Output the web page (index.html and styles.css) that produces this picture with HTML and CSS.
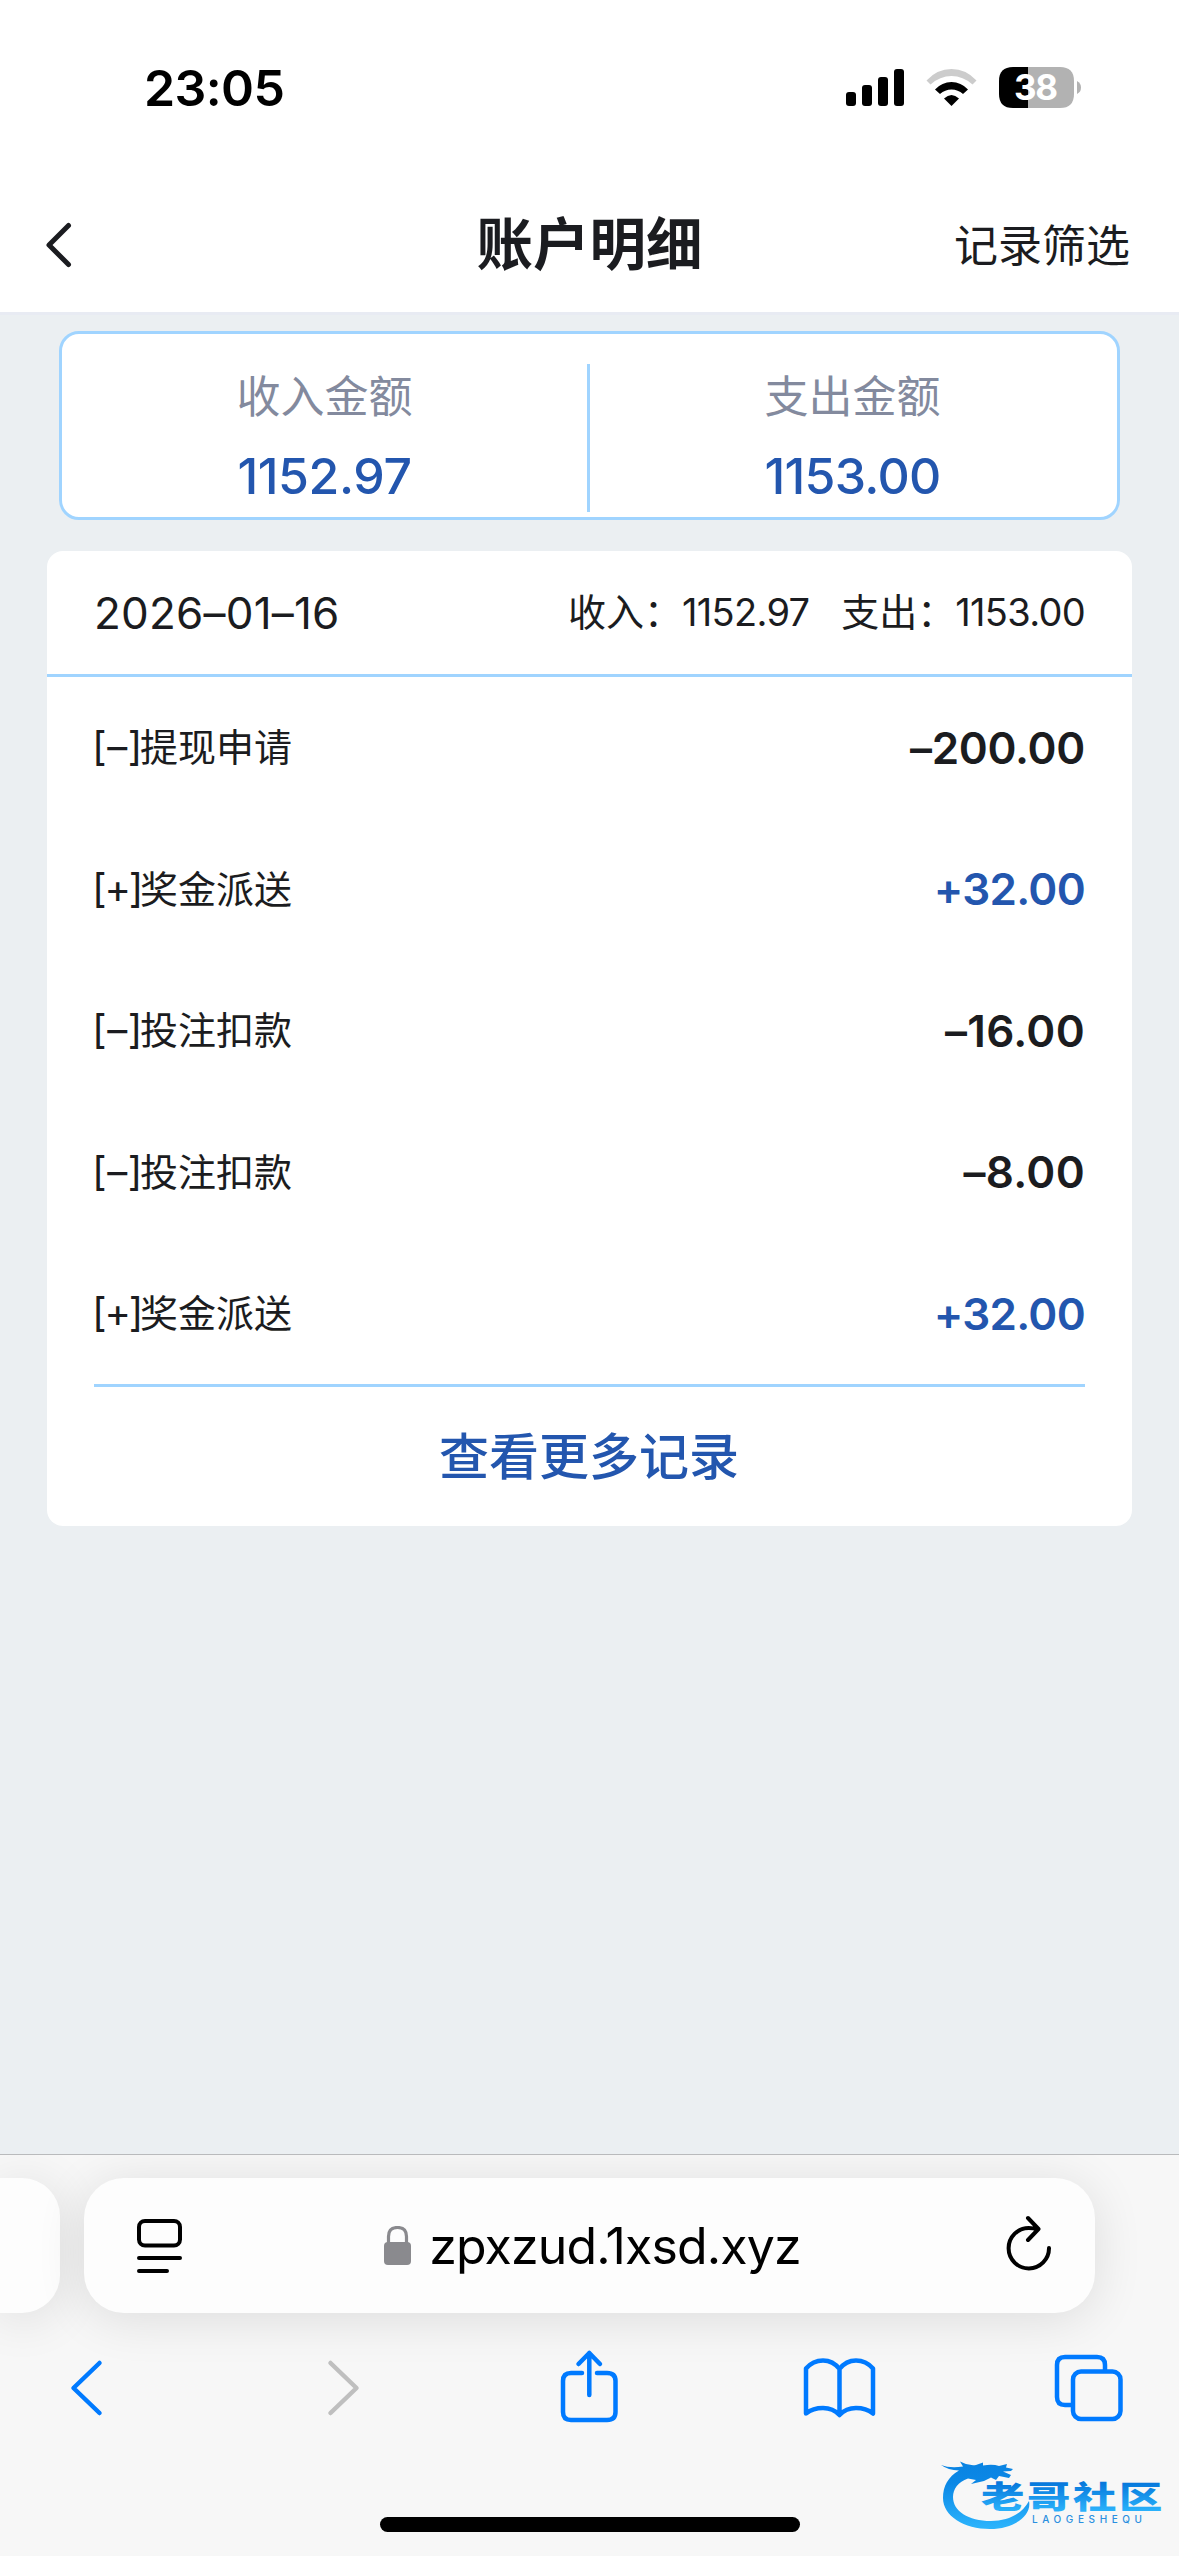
FILE: index.html
```html
<!DOCTYPE html>
<html lang="zh-CN">
<head>
<meta charset="utf-8">
<title>账户明细</title>
<link rel="stylesheet" href="styles.css">
</head>
<body>
<div class="screen">
  <div class="status">
    <span class="clock">23:05</span>
    <svg class="status-icons" width="236" height="42" viewBox="846 67 236 42">
      <rect x="846" y="92" width="10" height="14" rx="3"/>
      <rect x="862" y="85" width="10" height="21" rx="3"/>
      <rect x="878" y="77" width="10" height="29" rx="3"/>
      <rect x="894" y="69" width="10" height="37" rx="3"/>
      <path fill="#ccc" d="M926.5 80.500Q937 69 951.500 69T976.500 80.500L972.500 84.500Q963 76 951.500 76T930.500 84.500Z"/>
      <path d="M935 89.500Q942 82 951.500 82T968 89.500L963 94Q958 89.500 951.500 89.500T940 94Z"/>
      <path d="M944 98.500Q951.500 91.500 959 98.500L951.500 106Z"/>
      <path d="M1013 67H1028V108H1013Q999 108 999 94V81Q999 67 1013 67Z"/>
      <path fill="#b2b2b2" d="M1028 67H1060Q1074 67 1074 81V94Q1074 108 1060 108H1028Z"/>
      <path fill="#b2b2b2" d="M1077 81Q1081 83 1081 87.500T1077 94Z"/>
      <text class="battery-level" x="1036" y="100" text-anchor="middle" textLength="44">38</text>
    </svg>
  </div>
  <header class="nav">
    <svg class="nav-back" width="30" height="50" viewBox="0 0 30 50"><path d="M24.500 5.500L5 25L24.500 44.500"/></svg>
    <h1>账户明细</h1>
    <span class="filter">记录筛选</span>
  </header>
  <main>
    <section class="summary">
      <div class="total"><span class="label">收入金额</span><b class="in">1152.97</b></div>
      <i class="rule"></i>
      <div class="total"><span class="label">支出金额</span><b class="out">1153.00</b></div>
    </section>
    <section class="records">
      <div class="day">
        <span class="date">2026–01–16</span>
        <span class="sums"><span>收入：</span><span class="num">1152.97</span><span class="second">支出：</span><span class="num">1153.00</span></span>
      </div>
      <ul>
        <li><span><i class="minus-tag">[–]</i>提现申请</span><b>–200.00</b></li>
        <li><span><i class="plus-tag">[+]</i>奖金派送</span><b class="plus">+32.00</b></li>
        <li><span><i class="minus-tag">[–]</i>投注扣款</span><b class="short">–16.00</b></li>
        <li><span><i class="minus-tag">[–]</i>投注扣款</span><b class="short">–8.00</b></li>
        <li><span><i class="plus-tag">[+]</i>奖金派送</span><b class="plus">+32.00</b></li>
      </ul>
      <div class="more">查看更多记录</div>
    </section>
  </main>
  <footer>
    <div class="tabs">
      <div class="prev-tab"></div>
      <div class="address">
        <svg width="46" height="56" viewBox="137 2218 46 56" fill="none" stroke="#000" stroke-width="4" stroke-linecap="round">
          <rect x="139" y="2221" width="41" height="24.500" rx="6"/><path d="M139 2258H180M139 2271H167"/>
        </svg>
        <div class="host">
          <svg width="28" height="40" viewBox="384 2225 28 40"><rect x="384" y="2241" width="27" height="23" rx="4" fill="#8a8a8e"/><path d="M388.500 2242V2235.500Q388.500 2226.500 397.500 2226.500T406.500 2235.500V2242" fill="none" stroke="#8a8a8e" stroke-width="3.200"/></svg>
          <span>zpxzud.1xsd.xyz</span>
        </div>
        <svg class="reload" width="46" height="58" viewBox="1006 2214 46 58" fill="none" stroke="#000" stroke-width="4" stroke-linecap="round" stroke-linejoin="round"><path d="M1049 2248A20.200 20.200 0 1 1 1028.800 2228Q1033 2228 1038 2229.500M1028 2218L1038.500 2229L1028 2240"/></svg>
      </div>
    </div>
    <nav class="tools">
      <svg width="34" height="76" viewBox="70 2349 34 76"><path d="M99.500 2363L73.500 2388L99.500 2413"/></svg>
      <svg class="off" width="34" height="76" viewBox="327 2349 34 76"><path d="M330.500 2363L356.500 2388L330.500 2413"/></svg>
      <svg class="share" width="58" height="76" viewBox="560 2349 58 76"><path d="M582 2373H571Q563 2373 563 2381V2412Q563 2420 571 2420H607Q615.500 2420 615.500 2412V2381Q615.500 2373 607 2373H597" stroke-linecap="butt"/><path d="M589.300 2395V2353M578.500 2364L589.300 2353L600 2364"/></svg>
      <svg class="book" width="74" height="76" viewBox="803 2349 74 76"><path d="M839.500 2369Q833 2360.500 823 2360.500T806 2368.500V2413.500Q813 2408 823 2408T839.500 2415Q846 2408 856 2408T873 2413.500V2368.500Q866 2360.500 856 2360.500T839.500 2369ZM839.500 2369V2414"/></svg>
      <svg class="windows" width="70" height="76" viewBox="1054 2349 70 76"><path d="M1070.500 2405H1065Q1057 2405 1057 2397V2365Q1057 2357 1065 2357H1097Q1105 2357 1105 2365V2370"/><rect x="1073" y="2371.500" width="47.500" height="47.500" rx="8"/></svg>
    </nav>
    <div class="home"></div>
    <svg class="mark" width="230" height="84" viewBox="936 2452 230 84">
      <defs><linearGradient id="ring" x1="0" y1="2460" x2="0" y2="2528" gradientUnits="userSpaceOnUse"><stop offset="0" stop-color="#0a83e2"/><stop offset=".35" stop-color="#0b88e6"/><stop offset="1" stop-color="#2cb4fc"/></linearGradient>
      <linearGradient id="letters" x1="0" y1="-25" x2="0" y2="3" gradientUnits="userSpaceOnUse"><stop offset="0" stop-color="#0678dc"/><stop offset="1" stop-color="#2bb2fb"/></linearGradient></defs>
      <path fill="url(#ring)" d="M941 2465Q950 2468.500 963 2466.500L960 2461.500Q968 2466 976 2465L983 2462.500L983 2465.500Q993 2464 999 2466L1007 2464L1006 2467.500L1013 2469L1011 2471L1003 2471.500L1011 2475L1009 2478L999 2476L996 2480L991 2477.500L984 2481L971 2484L976 2480L968 2478.500C958 2482 953 2489 953 2497C953 2511 968 2521 991 2521C1008 2521 1022 2514 1029 2501C1032 2515 1015 2529 990 2529C964 2529 943 2516 943 2498C943 2486 948 2477 959 2470.500Q948 2470 941 2465Z"/>
      <g fill="url(#letters)" class="mark-name"><text transform="translate(981 2508) scale(1.400 1)">老</text><text transform="translate(1027 2508) scale(1.400 1)">哥</text><text transform="translate(1073 2508) scale(1.400 1)">社</text><text transform="translate(1119 2508) scale(1.400 1)">区</text></g>
      <text class="mark-latin" x="1032" y="2522.500" textLength="110">LAOGESHEQU</text>
    </svg>
  </footer>
</div>
</body>
</html>
```
FILE: styles.css
```css
* { box-sizing: border-box; }
body { margin: 0; font-family: Inter, "Noto Sans CJK SC", sans-serif; color: #1b1c20; }
i { font-style: normal; }
.screen { width: 1179px; height: 2556px; display: flex; flex-direction: column; background: #ebeff2; overflow: hidden; }

.status { height: 176px; background: #fff; display: flex; justify-content: space-between; padding: 67px 97px 0 144px; }
.clock { font-size: 50px; font-weight: 600; line-height: 42px; color: #000; letter-spacing: -.6px; }
.status-icons { display: block; }
.battery-level { font-size: 35px; font-weight: 700; fill: #fff; }

.nav { height: 139px; background: #fff; border-bottom: 3px solid #e8ebf3; display: grid; grid-template-columns: 1fr auto 1fr; align-items: center; padding: 2px 49px 0; }
.nav-back { margin-left: -5px; }
.nav-back path { fill: none; stroke: #1b1c20; stroke-width: 5; stroke-linecap: round; stroke-linejoin: round; }
.nav h1 { margin: 0; font-size: 56.500px; font-weight: 700; line-height: 64px; }
.filter { justify-self: end; font-size: 44px; line-height: 60px; padding-top: 2px; }

main { flex: 1; padding: 16px 47px 0; }
.summary { height: 189px; margin: 0 12px; background: #fff; border: 3px solid #a0d4ff; border-radius: 20px; display: flex; padding: 30px 2px 0 0; }
.total { flex: 1; display: flex; flex-direction: column; align-items: center; }
.total .label { font-size: 44px; line-height: 64px; padding-top: 1px; color: #838a9e; }
.total b { font-size: 50px; font-weight: 500; line-height: 60px; margin-top: 17px; color: #2356ae; }
.total .in { letter-spacing: -.4px; }
.total .out { letter-spacing: -.7px; }
.rule { width: 3px; height: 148px; background: #a0d4ff; }

.records { margin-top: 31px; height: 975px; background: #fff; border-radius: 16px; }
.day { height: 126px; border-bottom: 3px solid #a0d4ff; padding: 0 47px; display: flex; align-items: center; justify-content: space-between; }
.date { font-size: 44px; letter-spacing: .2px; }
.sums { display: flex; align-items: baseline; font-size: 38px; line-height: 56px; margin-top: -2px; }
.sums .num { letter-spacing: -.7px; }
.sums .second { margin-left: 32px; }
.records ul { list-style: none; margin: 0 47px; padding: 0; height: 710px; border-bottom: 3px solid #a0d4ff; }
.records li { height: 141.500px; display: flex; align-items: center; justify-content: space-between; font-size: 38px; }
.records li span { margin: -6px 0 0 -2px; display: flex; align-items: baseline; }
.records li i { width: 48px; white-space: nowrap; font-size: 40px; line-height: 1; }
.minus-tag { letter-spacing: .6px; }
.plus-tag { letter-spacing: -2.200px; }
.records li b { font-size: 44px; font-weight: 600; letter-spacing: -.3px; }
.records li .short { letter-spacing: .3px; }
.records li .plus { color: #2356ae; letter-spacing: -.7px; }
.more { height: 139px; display: flex; align-items: center; justify-content: center; padding: 0 1px 8px 0; font-size: 50px; font-weight: 500; color: #2356ae; }

footer { position: relative; height: 402px; background: #f7f7f7; border-top: 1px solid #b9babc; overflow: hidden; }
.tabs { display: flex; gap: 24px; padding-top: 23px; }
.prev-tab { width: 60px; height: 135px; background: #fdfdfd; border-radius: 0 38px 38px 0; box-shadow: 0 6px 50px rgba(0,0,0,.11); }
.address { width: 1011px; height: 135px; background: #fdfdfd; border-radius: 40px; box-shadow: 0 6px 50px rgba(0,0,0,.11); display: flex; align-items: center; justify-content: space-between; padding: 0 43px 0 53px; }
.reload { margin-top: -6px; }
.host { display: flex; align-items: center; gap: 17px; margin-right: 4px; font-size: 50px; letter-spacing: -.85px; color: #000; }
.tools { display: flex; padding: 36px 55px 0 70px; }
.tools .off { margin-left: 223px; }
.tools .share { margin-left: 199px; }
.tools .book { margin-left: 185px; }
.tools .windows { margin-left: 177px; }
.tools path, .tools rect { fill: none; stroke: #007aff; stroke-width: 4.500; stroke-linecap: round; stroke-linejoin: round; }
.tools .off path { stroke: #bfbfbf; }
.home { width: 420px; height: 15px; border-radius: 8px; background: #000; margin: 92px auto 0; }
.mark { position: absolute; left: 936px; top: 297px; }
.mark-name { font: 900 31px "Noto Sans CJK SC", sans-serif; }
.mark-latin { font: 500 10px Inter, sans-serif; fill: #2a8fe0; }
```
